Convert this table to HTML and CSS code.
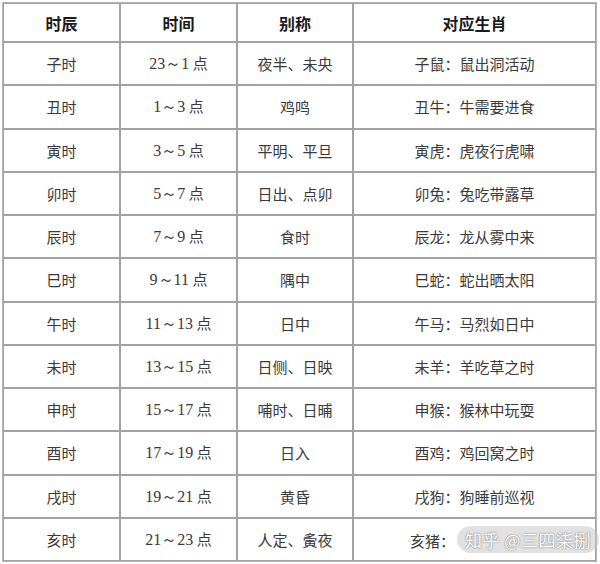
FILE: index.html
```html
<!DOCTYPE html>
<html lang="zh">
<head>
<meta charset="utf-8">
<link rel="stylesheet" href="styles.css">
</head>
<body>
<div class="wrap">
<table class="tbl">
  <colgroup>
    <col class="c1"><col class="c2"><col class="c3"><col class="c4">
  </colgroup>
  <thead>
    <tr class="head"><th>时辰</th><th>时间</th><th>别称</th><th>对应生肖</th></tr>
  </thead>
  <tbody>
    <tr><td>子时</td><td><span class="num">23～1</span> 点</td><td>夜半、未央</td><td>子鼠：鼠出洞活动</td></tr>
    <tr><td>丑时</td><td><span class="num">1～3</span> 点</td><td>鸡鸣</td><td>丑牛：牛需要进食</td></tr>
    <tr><td>寅时</td><td><span class="num">3～5</span> 点</td><td>平明、平旦</td><td>寅虎：虎夜行虎啸</td></tr>
    <tr><td>卯时</td><td><span class="num">5～7</span> 点</td><td>日出、点卯</td><td>卯兔：兔吃带露草</td></tr>
    <tr><td>辰时</td><td><span class="num">7～9</span> 点</td><td>食时</td><td>辰龙：龙从雾中来</td></tr>
    <tr><td>巳时</td><td><span class="num">9～11</span> 点</td><td>隅中</td><td>巳蛇：蛇出晒太阳</td></tr>
    <tr><td>午时</td><td><span class="num">11～13</span> 点</td><td>日中</td><td>午马：马烈如日中</td></tr>
    <tr><td>未时</td><td><span class="num">13～15</span> 点</td><td>日侧、日映</td><td>未羊：羊吃草之时</td></tr>
    <tr><td>申时</td><td><span class="num">15～17</span> 点</td><td>哺时、日晡</td><td>申猴：猴林中玩耍</td></tr>
    <tr><td>酉时</td><td><span class="num">17～19</span> 点</td><td>日入</td><td>酉鸡：鸡回窝之时</td></tr>
    <tr><td>戌时</td><td><span class="num">19～21</span> 点</td><td>黄昏</td><td>戌狗：狗睡前巡视</td></tr>
    <tr><td>亥时</td><td><span class="num">21～23</span> 点</td><td>人定、夤夜</td><td class="last">亥猪：<span class="watermark">知乎 @三四柒捌</span></td></tr>
  </tbody>
</table>
</div>
</body>
</html>
```

FILE: styles.css
```css
html, body {
  margin: 0;
  padding: 0;
  background: #ffffff;
}
.wrap {
  width: 600px;
  height: 564px;
  padding: 2px 3px 0 2px;
  box-sizing: border-box;
}
.tbl {
  border-collapse: separate;
  border-spacing: 0;
  width: 595px;
  border: 1px solid #b4b4b4;
  table-layout: fixed;
  font-family: "Liberation Serif", "Noto Sans CJK SC", serif;
}
.c1 { width: 117px; }
.c2 { width: 117px; }
.c3 { width: 116px; }
.c4 { width: auto; }
.tbl th, .tbl td {
  border: 1px solid #a2a2a2;
  text-align: center;
  padding: 0;
  vertical-align: middle;
}
.tbl th {
  height: 37px;
  font-family: "Noto Sans CJK SC", sans-serif;
  font-weight: 700;
  font-size: 16px;
  color: #1a1a1a;
}
.tbl td {
  height: 41.25px;
  font-size: 15px;
  color: #3a3a3a;
  font-family: "Noto Sans CJK SC", sans-serif;
}
.tbl td .num {
  font-family: "Liberation Serif", serif;
  font-size: 16px;
}
.tbl td.last {
  text-align: left;
  padding-left: 56px;
  white-space: nowrap;
}
.watermark {
  display: inline-block;
  margin-left: 2px;
  padding: 1px 8px;
  border-radius: 14px;
  background: rgba(200, 200, 200, 0.55);
  color: #ffffff;
  font-size: 17px;
  letter-spacing: 0.5px;
  text-shadow: 0 0 2px #8a8a8a, 0 0 1px #8a8a8a;
}
```
